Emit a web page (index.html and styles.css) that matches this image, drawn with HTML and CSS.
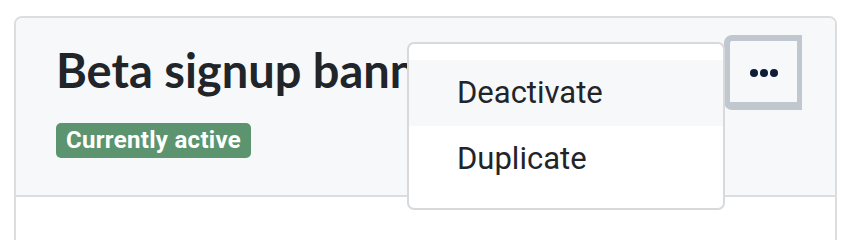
FILE: index.html
```html
<!DOCTYPE html>
<html>
<head>
<meta charset="utf-8">
<link rel="stylesheet" href="styles.css">
</head>
<body>
<div class="card">
  <div class="card-header">
    <div class="heading">
      <h1 class="title">Beta signup banner</h1>
      <span class="badge">Currently active</span>
    </div>
    <div class="actions">
      <div class="menu-button">
        <svg width="28" height="10" viewBox="0 0 28 10"><circle cx="4" cy="5" r="4"/><circle cx="14" cy="5" r="4"/><circle cx="24" cy="5" r="4"/></svg>
      </div>
      <div class="dropdown">
        <div class="dropdown-item active">Deactivate</div>
        <div class="dropdown-item">Duplicate</div>
      </div>
    </div>
  </div>
  <div class="card-body"></div>
</div>
</body>
</html>
```
FILE: styles.css
```css
html, body {
  margin: 0;
  padding: 0;
  background: #ffffff;
  overflow: hidden;
}
.card {
  margin: 16px 0 0 14px;
  width: 823px;
  box-sizing: border-box;
  border: 2px solid #dcdddf;
  border-radius: 8px;
  background: #ffffff;
}
.card-header {
  display: flex;
  justify-content: space-between;
  align-items: flex-start;
  padding: 17px 33px 37px 40px;
  background: #f7f8fa;
  border-bottom: 2px solid #dcdddf;
  border-radius: 6px 6px 0 0;
}
.heading {
  display: flex;
  flex-direction: column;
  align-items: flex-start;
}
.title {
  margin: 7px 0 0 0;
  font-family: Lato, "Liberation Sans", sans-serif;
  font-weight: 700;
  font-size: 47px;
  line-height: 1.2;
  color: #212529;
  white-space: nowrap;
}
.badge {
  margin-top: 25px;
  display: inline-block;
  padding: 6px 10px;
  background: #5b946f;
  color: #ffffff;
  border-radius: 5px;
  font-family: Roboto, "Liberation Sans", sans-serif;
  font-weight: 700;
  font-size: 24px;
  letter-spacing: 0.3px;
  line-height: 23px;
}
.actions {
  position: relative;
}
.menu-button {
  box-sizing: border-box;
  width: 78px;
  height: 75px;
  border-style: solid;
  border-color: #c1c7cf;
  border-width: 6px 5px 8px 6px;
  border-radius: 8px 0 0 8px;
  background: #f7f8fa;
  display: flex;
  align-items: center;
  justify-content: center;
}
.menu-button svg {
  fill: #0e1d38;
  display: block;
  margin-top: 2px;
}
.dropdown {
  position: absolute;
  right: 100%;
  margin-right: -1px;
  top: 7px;
  width: 318px;
  box-sizing: border-box;
  padding: 16px 0;
  background: #ffffff;
  border: 2px solid #d8d9dc;
  border-radius: 7px;
  z-index: 10;
}
.dropdown-item {
  padding: 8px 48px;
  font-family: Roboto, "Liberation Sans", sans-serif;
  font-weight: 400;
  font-size: 31px;
  line-height: 50px;
  color: #212529;
  white-space: nowrap;
}
.dropdown-item.active {
  background: #f7f8fa;
}
.card-body {
  height: 60px;
}
```
